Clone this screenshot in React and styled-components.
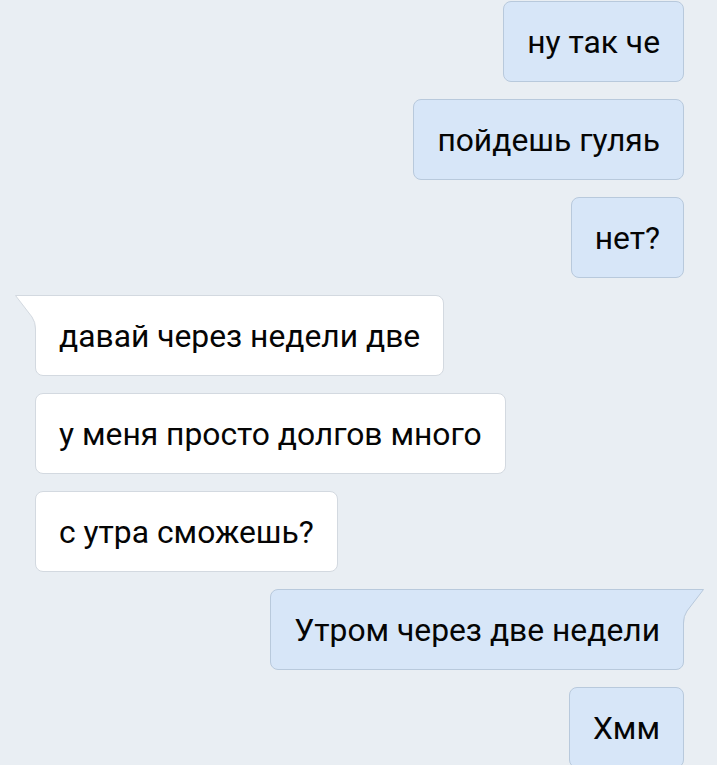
import React from 'react';
import styled, { createGlobalStyle } from 'styled-components';

const messages = [
    { out: true, text: 'ну так че' },
    { out: true, text: 'пойдешь гуляь' },
    { out: true, text: 'нет?' },
    { out: false, text: 'давай через недели две', tail: true },
    { out: false, text: 'у меня просто долгов много' },
    { out: false, text: 'с утра сможешь?' },
    { out: true, text: 'Утром через две недели', tail: true },
    { out: true, text: 'Хмм' },
];

const Tail = ({ out }) => (
    <TailSvg out={out} width="24" height="36" viewBox="0 0 24 36">
        {out ? (
            <>
                <path d="M0 0.5 L22.5 0.5 L6 22 Q2.5 27 2.5 34 L2.5 36 L0 36 Z" fill="#d7e6f8" />
                <path d="M0 0.5 L22.5 0.5 L6 22 Q2.5 27 2.5 34 L2.5 36" fill="none" stroke="#b8c9dc" strokeWidth="1" />
            </>
        ) : (
            <>
                <path d="M24 0.5 L1.5 0.5 L18 22 Q21.5 27 21.5 34 L21.5 36 L24 36 Z" fill="#ffffff" />
                <path d="M24 0.5 L1.5 0.5 L18 22 Q21.5 27 21.5 34 L21.5 36" fill="none" stroke="#d3d9e0" strokeWidth="1" />
            </>
        )}
    </TailSvg>
);

export default function App() {
    return (
        <>
            <GlobalStyle />
            <Chat>
                {messages.map((m, i) => (
                    <Row key={i} out={m.out}>
                        <Bubble out={m.out} tail={m.tail}>
                            {m.text}
                            {m.tail && <Tail out={m.out} />}
                        </Bubble>
                    </Row>
                ))}
            </Chat>
        </>
    );
}

const GlobalStyle = createGlobalStyle`
    html, body {
        margin: 0;
        padding: 0;
        background: #e9eef3;
        overflow: hidden;
    }
    body {
        font-family: Roboto, "Noto Sans", sans-serif;
    }
`;

const Chat = styled.div`
    display: flex;
    flex-direction: column;
    gap: 17px;
    padding: 1px 33px 0 35px;
`;

const Row = styled.div`
    display: flex;
    justify-content: ${(p) => (p.out ? 'flex-end' : 'flex-start')};
`;

const Bubble = styled.div`
    position: relative;
    box-sizing: border-box;
    height: 81px;
    display: flex;
    align-items: center;
    padding: 0 23px;
    font-size: 31.8px;
    color: #050505;
    white-space: nowrap;
    border-radius: 8px;
    background: ${(p) => (p.out ? '#d7e6f8' : '#ffffff')};
    border: 1px solid ${(p) => (p.out ? '#b8c9dc' : '#d3d9e0')};
    ${(p) => p.tail && (p.out ? 'border-top-right-radius: 0;' : 'border-top-left-radius: 0;')}
`;

const TailSvg = styled.svg`
    position: absolute;
    top: -1px;
    ${(p) => (p.out ? 'right: -22px;' : 'left: -22px;')}
    overflow: visible;
`;
